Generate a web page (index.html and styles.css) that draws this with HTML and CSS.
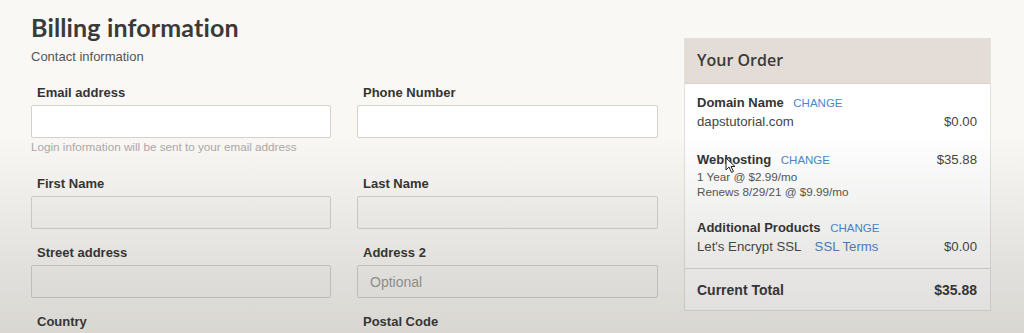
FILE: index.html
```html
<!DOCTYPE html>
<html>
<head>
<meta charset="utf-8">
<link rel="stylesheet" href="styles.css">
</head>
<body>
<div class="page">
  <section class="billing">
    <h1 class="title">Billing information</h1>
    <p class="subtitle">Contact information</p>
    <div class="grid">
      <div class="field">
        <label class="label">Email address</label>
        <div class="input input-white"></div>
        <div class="help">Login information will be sent to your email address</div>
      </div>
      <div class="field">
        <label class="label">Phone Number</label>
        <div class="input input-white"></div>
      </div>
      <div class="field">
        <label class="label">First Name</label>
        <div class="input"></div>
      </div>
      <div class="field">
        <label class="label">Last Name</label>
        <div class="input"></div>
      </div>
      <div class="field">
        <label class="label">Street address</label>
        <div class="input"></div>
      </div>
      <div class="field">
        <label class="label">Address 2</label>
        <div class="input"><span class="placeholder">Optional</span></div>
      </div>
      <div class="field field-last">
        <label class="label">Country</label>
      </div>
      <div class="field field-last">
        <label class="label">Postal Code</label>
      </div>
    </div>
  </section>

  <aside class="order">
    <div class="order-head">Your Order</div>
    <div class="order-body">
      <div class="item">
        <div class="row">
          <span class="name">Domain Name <a class="change">CHANGE</a></span>
        </div>
        <div class="row">
          <span class="detail">dapstutorial.com</span>
          <span class="price">$0.00</span>
        </div>
      </div>
      <div class="item item-hosting">
        <div class="row">
          <span class="name">Webhosting <a class="change">CHANGE</a></span>
          <span class="price">$35.88</span>
        </div>
        <div class="small">1 Year @ $2.99/mo</div>
        <div class="small">Renews 8/29/21 @ $9.99/mo</div>
        <svg class="cursor" width="11" height="17" viewBox="0 0 11 17"><path d="M1 1 L1 13 L4 10 L6.5 15.5 L8.5 14.5 L6 9.5 L10 9.5 Z" fill="#fff" stroke="#222" stroke-width="1"/></svg>
      </div>
      <div class="item">
        <div class="row">
          <span class="name">Additional Products <a class="change">CHANGE</a></span>
        </div>
        <div class="row">
          <span class="detail">Let's Encrypt SSL <a class="terms">SSL Terms</a></span>
          <span class="price">$0.00</span>
        </div>
      </div>
    </div>
    <div class="order-total">
      <span>Current Total</span>
      <span>$35.88</span>
    </div>
  </aside>
</div>
<div class="vignette"></div>
</body>
</html>
```
FILE: styles.css
```css
html, body {
  margin: 0;
  padding: 0;
}
body {
  width: 1024px;
  height: 333px;
  overflow: hidden;
  background: #faf8f5;
  font-family: "Liberation Sans", Arial, sans-serif;
  color: #333;
  position: relative;
}
.page {
  display: flex;
  align-items: flex-start;
  padding: 12px 0 0 31px;
  gap: 26px;
}
.billing {
  width: 627px;
  flex: none;
}
.title {
  margin: 0;
  font-family: "Lato", "Open Sans", sans-serif;
  font-weight: 700;
  font-size: 25px;
  line-height: 30px;
  color: #3a3a3a;
  letter-spacing: 0.15px;
}
.subtitle {
  margin: 7px 0 0;
  font-size: 13px;
  line-height: 16px;
  color: #555;
}
.grid {
  margin-top: 20px;
  display: grid;
  grid-template-columns: 300px 301px;
  column-gap: 26px;
}
.field {
  display: flex;
  flex-direction: column;
  margin-bottom: 16px;
}
.field:nth-child(-n+2) {
  margin-bottom: 22px;
}
.field-last {
  margin-bottom: 0;
}
.label {
  font-weight: 700;
  font-size: 13px;
  line-height: 16px;
  color: #333;
  padding-left: 6px;
  margin-bottom: 4px;
}
.input {
  height: 31px;
  border: 1px solid #d4d2cf;
  border-radius: 2px;
  background: #f7f6f4;
  display: flex;
  align-items: center;
  padding-left: 12px;
}
.input-white {
  background: #ffffff;
}
.placeholder {
  font-size: 14px;
  color: #999;
}
.help {
  margin-top: 2px;
  font-size: 11.7px;
  line-height: 14px;
  color: #aaa;
  white-space: nowrap;
}
.order {
  margin-top: 26px;
  width: 305px;
  flex: none;
  background: #ffffff;
  border: 1px solid #e4e1dd;
}
.order-head {
  height: 45px;
  background: #e4ddd7;
  border-bottom: 1px solid #d8d2cc;
  display: flex;
  align-items: center;
  padding: 0 0 3px 12px;
  box-sizing: border-box;
  font-family: "Open Sans", "Liberation Sans", sans-serif;
  font-weight: 600;
  font-size: 16px;
  color: #3a3a3a;
}
.order-body {
  padding: 10px 13px 12px 12px;
  border-bottom: 1px solid #dcd9d5;
}
.item {
  margin-bottom: 20px;
  position: relative;
}
.item:last-child {
  margin-bottom: 0;
}
.row {
  display: flex;
  justify-content: space-between;
  align-items: baseline;
}
.name {
  font-weight: 700;
  font-size: 13px;
  line-height: 18px;
  color: #333;
}
.change {
  font-weight: 400;
  font-size: 11.5px;
  color: #4a86cf;
  margin-left: 6px;
}
.detail {
  font-size: 13.2px;
  line-height: 19px;
  color: #444;
}
.terms {
  color: #4a7fc4;
  margin-left: 10px;
}
.price {
  font-size: 13.2px;
  color: #444;
}
.small {
  font-size: 11.7px;
  line-height: 15px;
  color: #555;
}
.cursor {
  position: absolute;
  left: 28px;
  top: 6px;
}
.order-total {
  display: flex;
  justify-content: space-between;
  padding: 12px 13px 11px 12px;
  font-weight: 700;
  font-size: 14px;
  line-height: 18px;
  color: #333;
}
.vignette {
  position: absolute;
  left: 0;
  top: 0;
  width: 1024px;
  height: 333px;
  pointer-events: none;
  background: linear-gradient(to bottom, rgba(80,70,60,0) 0%, rgba(80,70,60,0) 40%, rgba(70,65,55,0.13) 80%, rgba(70,65,55,0.18) 100%);
}
```
